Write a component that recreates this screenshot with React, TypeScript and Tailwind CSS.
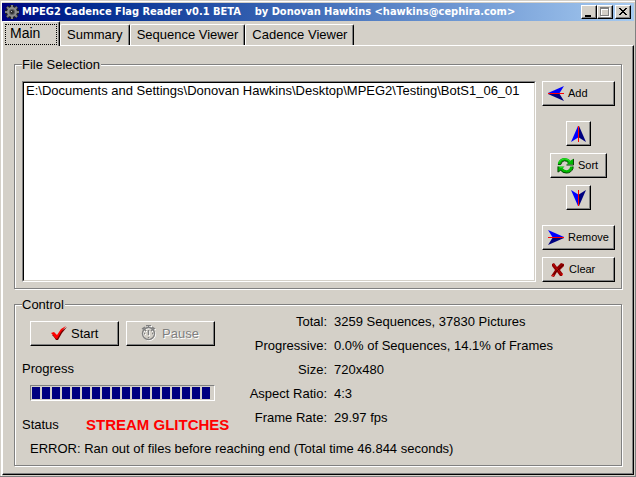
import React from 'react';

type ArrowDirection = 'left' | 'right' | 'up' | 'down';

interface ToolButtonProps {
  label: string;
  icon: React.ReactNode;
  iconOnly?: boolean;
  disabled?: boolean;
  className: string;
}

const raised =
  'border border-t-white border-l-white border-r-black border-b-black shadow-[inset_-1px_-1px_0_#808080] bg-[#d4d0c8]';

const tabs = ['Main', 'Summary', 'Sequence Viewer', 'Cadence Viewer'];

const files = ['E:\\Documents and Settings\\Donovan Hawkins\\Desktop\\MPEG2\\Testing\\BotS1_06_01'];

const stats = [
  { label: 'Total', value: '3259 Sequences, 37830 Pictures' },
  { label: 'Progressive', value: '0.0% of Sequences, 14.1% of Frames' },
  { label: 'Size', value: '720x480' },
  { label: 'Aspect Ratio', value: '4:3' },
  { label: 'Frame Rate', value: '29.97 fps' }
];

const PROGRESS_BLOCKS = 18;

// light half, dark half and centre line of each arrow
const arrowPaths: Record<ArrowDirection, [string, string, string]> = {
  left: ['M0 7 L16 0 L11 8 H0 Z', 'M0 8 L11 7 L16 15 Z', 'M0 7h16v1h-16z'],
  right: ['M16 7 L0 0 L5 8 H16 Z', 'M16 8 L5 7 L0 15 Z', 'M0 7h16v1h-16z'],
  up: ['M7 0 L0 16 L8 11 V0 Z', 'M8 0 L15 16 L7 11 Z', 'M7 0h1v16h-1z'],
  down: ['M7 16 L0 0 L8 5 V16 Z', 'M8 16 L15 0 L7 5 Z', 'M7 0h1v16h-1z']
};

const ArrowIcon: React.FC<{ direction: ArrowDirection }> = ({ direction }) => {
  const [light, dark, line] = arrowPaths[direction];
  const horizontal = direction === 'left' || direction === 'right';
  const width = horizontal ? 16 : 15;
  const height = horizontal ? 15 : 16;

  return (
    <svg width={width} height={height} viewBox={`0 0 ${width} ${height}`} className="shrink-0" aria-hidden="true">
      <path d={light} fill="#0000ff" />
      <path d={dark} fill="#000080" />
      <path d={line} fill="#ff0000" />
    </svg>
  );
};

const SortIcon: React.FC = () => (
  <svg width="17" height="17" viewBox="0 0 18 18" className="shrink-0" aria-hidden="true">
    <path d="M1 8 L1 6 Q3 1 8 1 Q12 1 14 4 L17 2 V8 H10 L12 6 Q10 4 8 4 Q5 4 4 8 Z" fill="#00b800" />
    <path d="M17 10 L17 12 Q15 17 10 17 Q6 17 4 14 L1 16 V10 H8 L6 12 Q8 14 10 14 Q13 14 14 10 Z" fill="#00b800" />
    <path d="M1 8 H4 Q5 4 8 4 Q10 4 12 6 M10 8.5 H17.5 V2" fill="none" stroke="#003c00" />
    <path d="M1 16 L4 14 Q6 17 10 17 Q15 17 17 12 V10 M1 10 V16" fill="none" stroke="#003c00" />
    <path d="M2 6 Q4 2 8 2 Q12 2 14 5 M3 11 H6" fill="none" stroke="#30e030" />
  </svg>
);

const ClearIcon: React.FC = () => (
  <svg width="14" height="15" viewBox="0 0 14 15" className="shrink-0" aria-hidden="true">
    <path d="M3 1 L6 5 L10 1 L13 2 L13 4 L9 8 L12 12 L11 14 L9 14 L6 10 L3 15 L0 14 L4 8 L1 4 L1 2 Z" fill="#900000" />
    <path d="M2 2 L7 8 L11 13" fill="none" stroke="#c00808" />
    <path d="M12 3 L7 8 L1 14" fill="none" stroke="#600000" />
    <path d="M1 14 L3 13 M11 13 L12 12" stroke="#ff2020" />
  </svg>
);

const CheckIcon: React.FC = () => (
  <svg width="16" height="15" viewBox="0 0 16 15" className="shrink-0" aria-hidden="true">
    <path d="M1 9 L3 8 L6 10 L10 5 L16 1 L11 7 L7 14 L5 14 L3 11 Z" fill="#700000" />
    <path d="M0 7 L3 6 L6 9 L10 3 L15 0 L10 6 L6 13 L4 12 L2 9 Z" fill="#ff0000" />
  </svg>
);

const stopwatchShapes = (
  <>
    <circle cx="7.5" cy="8.5" r="6" />
    <path d="M7.5 5v5M5 .5h5M7.5 1v2M1 4l3-2M11 2l3 2M2 3l2 2M13 3l-2 2M3 8.5h1M11 8.5h1M7.5 13v-1M4 5l1 1M11 5l-1 1" />
  </>
);

const StopwatchIcon: React.FC = () => (
  <svg width="17" height="17" viewBox="0 0 17 17" className="shrink-0" fill="none" aria-hidden="true">
    <g stroke="#ffffff" transform="translate(1 1)">
      {stopwatchShapes}
    </g>
    <g stroke="#808080" strokeWidth="1.4">
      {stopwatchShapes}
    </g>
  </svg>
);

const GearIcon: React.FC = () => (
  <svg width="16" height="16" viewBox="0 0 16 16" className="shrink-0" fill="none" aria-hidden="true">
    <path d="M8 1v14M1 8h14M3 3l10 10M13 3l-10 10" stroke="#202020" strokeWidth="4" />
    <path d="M8 1v14M1 8h14M3 3l10 10M13 3l-10 10" stroke="#808080" strokeWidth="2" />
    <circle cx="8" cy="8" r="4" fill="#606060" stroke="#8c8c8c" strokeWidth="2" />
    <circle cx="8" cy="8" r="2" fill="#303030" />
    <path d="M7 7h1v1h-1z" fill="#c0c0c0" />
  </svg>
);

const ToolButton: React.FC<ToolButtonProps> = ({ label, icon, iconOnly, disabled, className }) => (
  <button
    type="button"
    disabled={disabled}
    aria-label={iconOnly ? label : undefined}
    className={`flex h-[25px] shrink-0 items-center ${raised} ${className}`}
  >
    {icon}
    {!iconOnly && <span>{label}</span>}
  </button>
);

const GroupBox: React.FC<{ title: string; className: string; children: React.ReactNode }> = ({
  title,
  className,
  children
}) => (
  <fieldset
    className={`min-w-0 border border-[#808080] pr-1.5 pl-[7px] shadow-[1px_1px_0_#fff,inset_1px_1px_0_#fff] ${className}`}
  >
    <legend className="bg-[#d4d0c8] pr-px leading-[17px]">{title}</legend>
    {children}
  </fieldset>
);

const TitleBar: React.FC = () => (
  <header className="flex h-[18px] items-center bg-linear-to-r from-[#000080] to-[#a6caf0] pr-[3px] pl-0.5">
    <GearIcon />
    <h1 className="min-w-0 flex-1 overflow-hidden pl-0.5 font-['DejaVu_Sans_Condensed','DejaVu_Sans',sans-serif] text-[11px] font-bold whitespace-pre text-white">
      {'MPEG2 Cadence Flag Reader v0.1 BETA    by Donovan Hawkins <hawkins@cephira.com>'}
    </h1>
    <div className="flex">
      <button type="button" aria-label="Minimize" className={`h-3.5 w-[16px] ${raised}`}>
        <svg width="14" height="12" viewBox="0 0 14 12" shapeRendering="crispEdges">
          <path d="M3 9h6v2h-6z" fill="#000" />
        </svg>
      </button>
      <button type="button" aria-label="Maximize" disabled className={`h-3.5 w-[16px] ${raised}`}>
        <svg width="14" height="12" viewBox="0 0 14 12" fill="none" shapeRendering="crispEdges">
          <path d="M3 3h9M3.5 2v9M11.5 2v9M3 10.5h9" stroke="#fff" />
          <path d="M2 1h9v2h-9zM2 1h1v9h-1zM10 1h1v9h-1zM2 9h9v1h-9z" fill="#808080" />
        </svg>
      </button>
      <button type="button" aria-label="Close" className={`ml-0.5 h-3.5 w-[16px] ${raised}`}>
        <svg width="14" height="12" viewBox="0 0 14 12" shapeRendering="crispEdges">
          <path
            d="M3 2h2v1h1v1h2v-1h1v-1h2v1h-1v1h-1v1h-1v1h1v1h1v1h1v1h-2v-1h-1v-1h-2v1h-1v1h-2v-1h1v-1h1v-1h1v-1h-1v-1h-1v-1h-1z"
            fill="#000"
          />
        </svg>
      </button>
    </div>
  </header>
);

const TabStrip: React.FC = () => (
  <div role="tablist" className="flex h-6 items-end leading-4">
    {tabs.map((tab, index) =>
      index === 0 ? (
        <button
          key={tab}
          type="button"
          role="tab"
          aria-selected
          className="z-10 -mb-px flex h-[25px] w-[58px] rounded-t-xs border border-b-0 border-white border-r-black bg-[#d4d0c8] p-0.5 text-sm leading-4 shadow-[inset_-1px_0_0_#808080]"
        >
          <span className="h-[21px] flex-1 border border-dotted border-black pl-1 text-left">{tab}</span>
        </button>
      ) : (
        <button
          key={tab}
          type="button"
          role="tab"
          aria-selected={false}
          className="h-[21px] rounded-t-xs border border-b-0 border-white border-r-black px-1.5 shadow-[inset_-1px_0_0_#808080]"
        >
          {tab}
        </button>
      )
    )}
  </div>
);

const FileSelection: React.FC = () => (
  <GroupBox title="File Selection" className="pb-1.5">
    <div className="flex gap-1.5 pt-2">
      <div className="flex min-w-0 flex-1 border border-t-[#808080] border-r-white border-b-white border-l-[#808080]">
        <select
          size={2}
          aria-label="Files"
          className="w-full min-w-0 appearance-none overflow-hidden border border-t-black border-r-[#d4d0c8] border-b-[#d4d0c8] border-l-black bg-white leading-4 outline-none"
        >
          {files.map((file) => (
            <option key={file} className="px-0.5 py-0">
              {file}
            </option>
          ))}
        </select>
      </div>
      <div className="flex w-[73px] shrink-0 flex-col items-center gap-[7px] text-[11px]">
        <ToolButton label="Add" icon={<ArrowIcon direction="left" />} className="mb-2 w-full gap-1 pl-[5px]" />
        <ToolButton label="Move up" icon={<ArrowIcon direction="up" />} iconOnly className="w-[25px] justify-center" />
        <ToolButton label="Sort" icon={<SortIcon />} className="w-[57px] gap-1 pl-1.5" />
        <ToolButton label="Move down" icon={<ArrowIcon direction="down" />} iconOnly className="w-[25px] justify-center" />
        <ToolButton label="Remove" icon={<ArrowIcon direction="right" />} className="mt-2 w-full gap-1 pl-[5px]" />
        <ToolButton label="Clear" icon={<ClearIcon />} className="w-full gap-1 pl-2" />
      </div>
    </div>
  </GroupBox>
);

const ControlPanel: React.FC = () => (
  <GroupBox title="Control" className="pb-2">
    <div className="flex leading-4">
      <div className="w-52 shrink-0 pt-2">
        <div className="flex gap-[7px] pl-2">
          <ToolButton label="Start" icon={<CheckIcon />} className="w-[89px] gap-1 pl-5" />
          <ToolButton
            label="Pause"
            icon={<StopwatchIcon />}
            disabled
            className="w-[89px] gap-1 pl-3.5 text-[#808080] [text-shadow:1px_1px_0_#fff]"
          />
        </div>
        <div id="progress-label" className="mt-[15px]">
          Progress
        </div>
        <div
          role="progressbar"
          aria-labelledby="progress-label"
          aria-valuenow={100}
          className="mt-2 ml-2 flex h-4 w-[185px] gap-0.5 border border-t-[#808080] border-r-white border-b-white border-l-[#808080] p-px"
        >
          {Array.from({ length: PROGRESS_BLOCKS }, (_, block) => (
            <span key={block} className="w-2 bg-[#000080]" />
          ))}
        </div>
        <div className="mt-4 flex">
          <span className="w-16">Status</span>
          <strong className="text-[15px] leading-4 whitespace-nowrap text-[#ff0000]">STREAM GLITCHES</strong>
        </div>
      </div>
      <dl className="-mt-[3px] grid auto-rows-[24px] grid-cols-[97px_1fr] gap-x-[7px] leading-6 whitespace-nowrap">
        {stats.map(({ label, value }) => (
          <React.Fragment key={label}>
            <dt className="text-right">{label}:</dt>
            <dd>{value}</dd>
          </React.Fragment>
        ))}
      </dl>
    </div>
    <p className="mt-2 pl-2 leading-4">
      ERROR: Ran out of files before reaching end (Total time 46.844 seconds)
    </p>
  </GroupBox>
);

const App: React.FC = () => (
  <div className="border-r border-b border-[#808080] bg-[#d4d0c8] pt-px pl-px font-['Liberation_Sans',Arial,sans-serif] text-[13px] text-black">
    <div className="border-t border-l border-white pt-px pr-px pb-px">
      <TitleBar />
      <TabStrip />
      <main className="flex flex-col gap-[7px] border border-white border-r-black border-b-black px-[11px] pt-2.5 pb-2 shadow-[inset_-1px_-1px_0_#808080]">
        <FileSelection />
        <ControlPanel />
      </main>
    </div>
  </div>
);

export default App;
